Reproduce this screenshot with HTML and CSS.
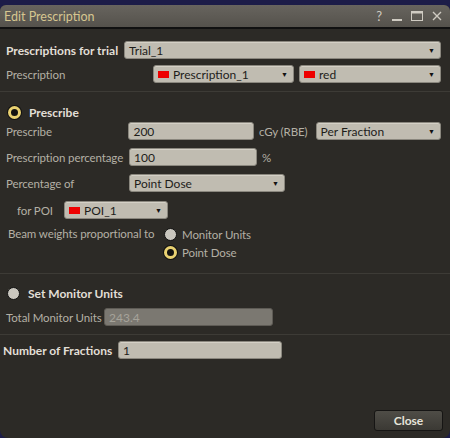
FILE: index.html
```html
<!DOCTYPE html>
<html lang="en">
<head>
    <meta charset="UTF-8">
    <title>Edit Prescription</title>
    <link rel="stylesheet" href="styles.css">
</head>
<body>
    <div class="window">
        <div class="titlebar">
            <span class="title">Edit Prescription</span>
            <div class="win-buttons">
                <span class="help">?</span>
                <svg width="14" height="14" viewBox="0 0 14 14"><rect x="2" y="10" width="10" height="2" fill="#cfcbc2"/></svg>
                <svg width="14" height="14" viewBox="0 0 14 14"><rect x="1.5" y="2.5" width="11" height="9" fill="none" stroke="#cfcbc2" stroke-width="1"/><rect x="1.5" y="2.5" width="11" height="2" fill="#cfcbc2"/></svg>
                <svg width="14" height="14" viewBox="0 0 14 14"><path d="M3 3 L11 11 M11 3 L3 11" stroke="#cfcbc2" stroke-width="1.4"/></svg>
            </div>
        </div>

        <div class="content">
            <div class="row row-trial">
                <span class="label strong w-trial">Prescriptions for trial</span>
                <div class="select grow">Trial_1<span class="arrow">▼</span></div>
            </div>
            <div class="row row-rx">
                <span class="label w-rx">Prescription</span>
                <div class="select sel-rx"><span class="swatch"></span>Prescription_1<span class="arrow">▼</span></div>
                <div class="select sel-color"><span class="swatch"></span>red<span class="arrow">▼</span></div>
            </div>

            <div class="sep sep-1"></div>

            <div class="row head">
                <span class="radio on"></span>
                <span class="label strong">Prescribe</span>
            </div>
            <div class="row row-dose">
                <span class="label w-main">Prescribe</span>
                <div class="input in-dose">200</div>
                <span class="label unit">cGy (RBE)</span>
                <div class="select sel-per">Per Fraction<span class="arrow">▼</span></div>
            </div>
            <div class="row row-gap">
                <span class="label w-main">Prescription percentage</span>
                <div class="input in-pct">100</div>
                <span class="label unit">%</span>
            </div>
            <div class="row row-gap">
                <span class="label w-main">Percentage of</span>
                <div class="select sel-of">Point Dose<span class="arrow">▼</span></div>
            </div>
            <div class="row row-poi">
                <span class="label w-poi">for POI</span>
                <div class="select sel-poi"><span class="swatch"></span>POI_1<span class="arrow">▼</span></div>
            </div>
            <div class="beam">
                <span class="label beam-label">Beam weights proportional to</span>
                <div class="beam-options">
                    <div class="option"><span class="radio"></span><span class="label">Monitor Units</span></div>
                    <div class="option"><span class="radio on"></span><span class="label">Point Dose</span></div>
                </div>
            </div>

            <div class="sep sep-2"></div>

            <div class="row head head-mu">
                <span class="radio"></span>
                <span class="label strong">Set Monitor Units</span>
            </div>
            <div class="row row-mu">
                <span class="label w-mu">Total Monitor Units</span>
                <div class="input disabled in-mu">243.4</div>
            </div>

            <div class="sep sep-3"></div>

            <div class="row row-frac">
                <span class="label strong w-frac">Number of Fractions</span>
                <div class="input in-frac">1</div>
            </div>
        </div>

        <div class="footer">
            <button class="close-btn">Close</button>
        </div>
    </div>
</body>
</html>
```

FILE: styles.css
```css
:root {
    --bg: #2c2a26;
    --label: #b4b0a5;
    --strong: #e2dfd6;
    --field: #c0bcb1;
    --field-border: #8a877e;
    --yellow: #e9d171;
}

* {
    margin: 0;
    padding: 0;
    box-sizing: border-box;
}

body {
    width: 450px;
    height: 438px;
    overflow: hidden;
    background: #1c1c48;
    font-family: Lato, "Liberation Sans", sans-serif;
    font-size: 12px;
}

.window {
    margin-top: 5px;
    height: 433px;
    background: var(--bg);
    border-radius: 6px 6px 8px 8px;
    overflow: hidden;
    display: flex;
    flex-direction: column;
}

.titlebar {
    height: 24px;
    background: linear-gradient(#67645e, #55524c);
    border-bottom: 2px solid #111;
    display: flex;
    align-items: center;
    justify-content: space-between;
    padding: 0 6px 0 4px;
    flex: none;
}

.title {
    color: #d6c690;
    font-size: 12.5px;
}

.win-buttons {
    display: flex;
    align-items: center;
    gap: 6px;
}

.win-buttons svg {
    display: block;
}

.help {
    color: #cfcbc2;
    font-size: 13px;
    margin-right: 2px;
}

.content {
    flex: 1;
    padding: 12px 9px 0 6px;
}

.row {
    display: flex;
    align-items: center;
    height: 18px;
}

.label {
    color: var(--label);
    white-space: nowrap;
    font-size: 11.5px;
    letter-spacing: -0.1px;
}

.strong {
    color: var(--strong);
    font-weight: bold;
    font-size: 12px;
    letter-spacing: 0;
}

.select, .input {
    height: 18px;
    background: var(--field);
    border: 1px solid var(--field-border);
    border-radius: 3px;
    color: #1e1d1a;
    display: flex;
    align-items: center;
    padding: 0 4px;
    position: relative;
    white-space: nowrap;
    box-shadow: inset 0 1px 0 #d4d0c6;
}

.arrow {
    position: absolute;
    right: 5px;
    top: 4px;
    font-size: 7px;
    color: #111;
}

.swatch {
    width: 11px;
    height: 7px;
    background: #ee0000;
    margin-right: 4px;
    flex: none;
}

.grow { flex: 1; }

.w-trial { width: 118px; }
.w-rx { width: 147px; }
.w-main { width: 123px; }
.w-poi { width: 58px; padding-left: 11px; }
.w-mu { width: 98px; }
.w-frac { width: 115px; }

.row-rx { margin-top: 6px; }
.sel-rx { width: 141px; }
.sel-color { width: 142px; margin-left: 5px; }

.sep {
    height: 1px;
    background: #3d3b36;
    margin-left: -6px;
    margin-right: -9px;
}

.sep-1 { margin-top: 8px; }
.sep-2 { margin-top: 14px; }
.sep-3 { margin-top: 8px; }

.head {
    margin-top: 11px;
    padding-left: 2px;
    gap: 8px;
}

.radio {
    width: 13px;
    height: 13px;
    border-radius: 50%;
    background: #c9c6be;
    border: 1px solid #111;
    flex: none;
}

.radio.on {
    background: #141311;
    border: 3px solid var(--yellow);
    box-shadow: 0 0 0 1px #111;
}

.row-dose { margin-top: 1px; }
.in-dose { width: 126px; }
.unit { margin-left: 5px; }
.sel-per { width: 126px; margin-left: 8px; }

.row-gap { margin-top: 8px; }
.in-pct { width: 128px; }
.sel-of { width: 156px; }

.row-poi { margin-top: 9px; }
.sel-poi { width: 104px; }

.beam {
    display: flex;
    margin-top: 8px;
    padding-left: 2px;
}

.beam-label {
    width: 156px;
    line-height: 14px;
}

.beam-options {
    display: flex;
    flex-direction: column;
    gap: 4px;
}

.option {
    display: flex;
    align-items: center;
    gap: 5px;
    height: 14px;
}

.head-mu {
    margin-top: 10px;
    padding-left: 1px;
}

.row-mu { margin-top: 6px; }
.in-mu {
    width: 169px;
    background: #7b7871;
    border-color: #5e5b55;
    color: #a6a39a;
    box-shadow: none;
}

.row-frac {
    margin-top: 6px;
    margin-left: -3px;
}
.in-frac { width: 164px; }

.footer {
    display: flex;
    justify-content: flex-end;
    padding: 0 7px 7px 0;
}

.close-btn {
    width: 69px;
    height: 21px;
    background: linear-gradient(#4f4d47, #3b3934);
    border: 1px solid #161514;
    border-radius: 3px;
    color: #e6e3da;
    font-family: Lato, "Liberation Sans", sans-serif;
    font-weight: bold;
    font-size: 12px;
}
```
